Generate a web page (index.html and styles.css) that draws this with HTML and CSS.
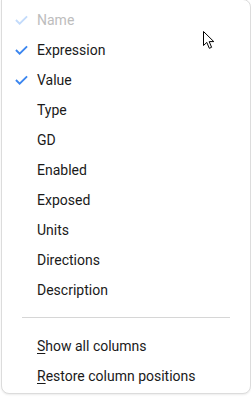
FILE: index.html
```html
<!DOCTYPE html>
<html lang="en">
<head>
    <meta charset="UTF-8">
    <title>Columns menu</title>
    <link rel="stylesheet" href="styles.css">
</head>
<body>
    <div class="menu">
        <ul class="menu-list">
            <li class="menu-item disabled">
                <svg class="check" viewBox="0 0 14 10"><path d="M1 5 L5 9 L13 1" /></svg>
                Name
            </li>
            <li class="menu-item">
                <svg class="check" viewBox="0 0 14 10"><path d="M1 5 L5 9 L13 1" /></svg>
                Expression
            </li>
            <li class="menu-item">
                <svg class="check" viewBox="0 0 14 10"><path d="M1 5 L5 9 L13 1" /></svg>
                Value
            </li>
            <li class="menu-item">Type</li>
            <li class="menu-item">GD</li>
            <li class="menu-item">Enabled</li>
            <li class="menu-item">Exposed</li>
            <li class="menu-item">Units</li>
            <li class="menu-item">Directions</li>
            <li class="menu-item">Description</li>
        </ul>
        <div class="separator"></div>
        <ul class="menu-list">
            <li class="menu-item"><u>S</u>how all columns</li>
            <li class="menu-item"><u>R</u>estore column positions</li>
        </ul>
    </div>

    <!-- mouse pointer -->
    <svg class="cursor" viewBox="0 0 13 19">
        <path d="M0.5 0.5 L0.5 14.5 L3.8 11.4 L6.3 17.3 L8.6 16.3 L6.2 10.6 L10.8 10.6 Z" />
    </svg>
</body>
</html>
```

FILE: styles.css
```css
body {
    margin: 0;
    background: #ffffff;
    font-family: Roboto, "Noto Sans", Arial, sans-serif;
    width: 251px;
    height: 397px;
    overflow: hidden;
    position: relative;
}
.menu {
    box-sizing: border-box;
    width: 250px;
    height: 395px;
    margin-top: -1px;
    margin-left: 1px;
    background: #fff;
    border: 1px solid #dcdcdc;
    border-radius: 0 8px 8px 8px;
    box-shadow: 0 1px 2px rgba(0, 0, 0, 0.08);
    padding-top: 5px;
}
.menu-list {
    list-style: none;
    margin: 0;
    padding: 0;
}
.menu-item {
    position: relative;
    height: 30px;
    line-height: 30px;
    padding-left: 35px;
    font-size: 14px;
    color: #1a1a1a;
}
.menu-item.disabled {
    color: #bdbdbd;
}
.check {
    position: absolute;
    left: 13px;
    top: 10px;
    width: 13px;
    height: 10px;
    fill: none;
    stroke: #3b86f0;
    stroke-width: 2;
}
.disabled .check {
    stroke: #c3dbfb;
}
.menu-item u {
    text-decoration-thickness: 1px;
    text-underline-offset: 2px;
}
.separator {
    height: 1px;
    background: #d6d6d6;
    margin: 12px 20px 13px 20px;
}
.cursor {
    position: absolute;
    left: 203px;
    top: 31px;
    width: 13px;
    height: 19px;
    fill: #fff;
    stroke: #000;
    stroke-width: 1;
}
```
